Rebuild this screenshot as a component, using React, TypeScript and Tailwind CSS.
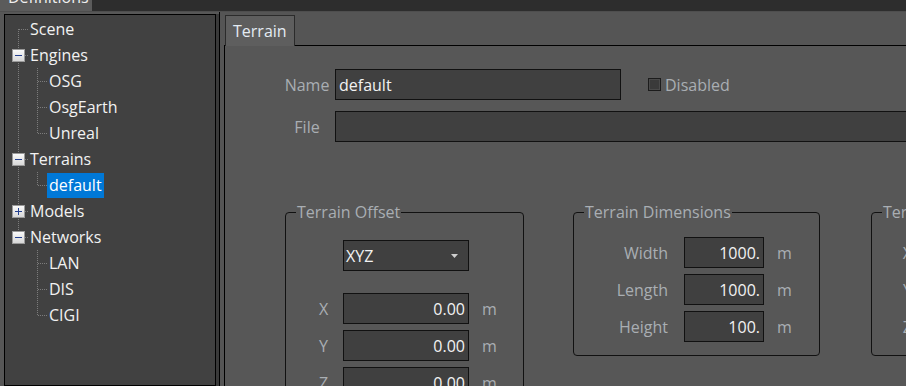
import React from "react";

type Node = { label: string; level: number; exp?: "-" | "+"; selected?: boolean };

const nodes: Node[] = [
  { label: "Scene", level: 0 },
  { label: "Engines", level: 0, exp: "-" },
  { label: "OSG", level: 1 },
  { label: "OsgEarth", level: 1 },
  { label: "Unreal", level: 1 },
  { label: "Terrains", level: 0, exp: "-" },
  { label: "default", level: 1, selected: true },
  { label: "Models", level: 0, exp: "+" },
  { label: "Networks", level: 0, exp: "-" },
  { label: "LAN", level: 1 },
  { label: "DIS", level: 1 },
  { label: "CIGI", level: 1 },
];

const Expander = ({ open }: { open: boolean }) => (
  <svg width="13" height="13" viewBox="0 0 13 13" className="relative z-10">
    <defs>
      <linearGradient id="expg" x1="0" y1="0" x2="0" y2="1">
        <stop offset="0" stopColor="#fbfbfb" />
        <stop offset="1" stopColor="#d6d6d6" />
      </linearGradient>
    </defs>
    <rect x="0.5" y="0.5" width="12" height="12" fill="url(#expg)" stroke="#9a9a9a" />
    <path d="M3 6.5H10" stroke="#24408f" shapeRendering="crispEdges" />
    {!open && <path d="M6.5 3V10" stroke="#24408f" shapeRendering="crispEdges" />}
  </svg>
);

// dotted connector lines of the tree
const TreeLines = () => {
  const c = (i: number) => 14 + 26 * i;
  const top = (i: number) => 1 + 26 * i;
  const dash = { stroke: "#7c7c7c", strokeDasharray: "1 1", shapeRendering: "crispEdges" as const };
  return (
    <svg className="absolute inset-0 pointer-events-none" width="210" height="400">
      <line x1="13.5" y1={c(0)} x2="13.5" y2={c(8)} {...dash} />
      {[0, 1, 5, 7, 8].map((i) => (
        <line key={i} x1="14" y1={c(i) + 0.5} x2="24" y2={c(i) + 0.5} {...dash} />
      ))}
      <line x1="32.5" y1={top(2)} x2="32.5" y2={c(4)} {...dash} />
      <line x1="32.5" y1={top(6)} x2="32.5" y2={c(6)} {...dash} />
      <line x1="32.5" y1={top(9)} x2="32.5" y2={c(11)} {...dash} />
      {[2, 3, 4, 6, 9, 10, 11].map((i) => (
        <line key={"h" + i} x1="33" y1={c(i) + 0.5} x2="42" y2={c(i) + 0.5} {...dash} />
      ))}
    </svg>
  );
};

const Field = ({ w, value, align = "right" }: { w: string; value: string; align?: string }) => (
  <div
    className={`${w} shrink-0 h-[31px] bg-[#404040] border border-[#111] flex items-center text-[#f2f2f2] ${
      align === "right" ? "justify-end pr-[3px]" : "pl-[3px]"
    }`}
  >
    {value}
  </div>
);

const Legend = ({ children }: { children: React.ReactNode }) => (
  <legend className="ml-[10px] px-[1px] leading-[22px] text-[#a9aeb3]">{children}</legend>
);

export default function App() {
  return (
    <div className="w-[906px] h-[386px] overflow-hidden bg-[#2d2d2d] flex flex-col font-['Open_Sans',sans-serif] text-[16px]">
      {/* top dock title */}
      <div className="h-[12px] shrink-0 border-b border-[#4e4e4e] flex">
        <div className="w-[92px] h-[11px] bg-[#5b5b5b] overflow-hidden">
          <div className="-mt-[14px] pl-[8px] leading-[22px] text-[#f0f0f0]">Definitions</div>
        </div>
      </div>

      <div className="flex flex-1 min-h-0">
        {/* left: tree */}
        <div className="flex shrink-0 bg-[#575757] pl-[4px] pt-[2px]">
          <div className="w-[212px] bg-[#414141] border border-black relative">
            <TreeLines />
            <div className="pt-[1px] relative">
              {nodes.map((n) => (
                <div key={n.label} className="h-[26px] flex items-center">
                  {n.level === 0 ? (
                    <div className="w-[25px] shrink-0 flex items-center">
                      {n.exp && (
                        <div className="ml-[7px]">
                          <Expander open={n.exp === "-"} />
                        </div>
                      )}
                    </div>
                  ) : (
                    <div className="w-[42px] shrink-0" />
                  )}
                  <span
                    className={`leading-[25px] ${
                      n.level === 1 ? "px-[2px]" : ""
                    } ${n.selected ? "bg-[#0078d7] text-white" : "text-[#f2f2f2]"}`}
                  >
                    {n.label}
                  </span>
                </div>
              ))}
            </div>
          </div>
          <div className="w-[3px] bg-[#3a3a3a]" />
        </div>

        {/* right: tab widget */}
        <div className="flex-1 border-l border-black bg-[#555555] pl-[4px] pt-[3px] flex flex-col min-w-0">
          <div className="flex">
            <div className="ml-[1px] h-[31px] -mb-[1px] relative z-10 px-[7px] flex items-center bg-[#5e5e5e] border border-b-0 border-[#2b2b2b] text-[#e4ebf2]">
              Terrain
            </div>
          </div>
          <div className="flex-1 border-t border-l border-black bg-[#575757] flex flex-col">
            <div className="mt-[23px] flex items-center">
              <div className="ml-[54px] w-[56px] shrink-0 text-center text-[#a9aeb3]">Name</div>
              <Field w="w-[286px]" value="default" align="left" />
              <div className="ml-[27px] w-[13px] h-[13px] shrink-0 border border-[#1c1c1c] bg-[#3a3a3a] shadow-[inset_0_0_0_1px_#4a4a4a]" />
              <span className="ml-[4px] text-[#a9aeb3]">Disabled</span>
            </div>
            <div className="mt-[11px] flex items-center">
              <div className="ml-[54px] w-[56px] shrink-0 text-center text-[#a9aeb3]">File</div>
              <Field w="w-[700px]" value="" align="left" />
            </div>

            <div className="mt-[59px] flex items-start">
              <fieldset className="ml-[60px] w-[239px] h-[220px] shrink-0 border border-[#111] rounded-[4px]">
                <Legend>Terrain Offset</Legend>
                <div className="mt-[17px] ml-[57px] w-[126px] h-[31px] bg-[#404040] border border-[#111] flex items-center justify-between pl-[2px] pr-[10px] text-[#f2f2f2]">
                  <span>XYZ</span>
                  <svg width="7" height="4" viewBox="0 0 7 4">
                    <path d="M0 0H7L3.5 4Z" fill="#cfcfcf" />
                  </svg>
                </div>
                <div className="mt-[22px] flex flex-col gap-[6px]">
                  {["X", "Y", "Z"].map((l) => (
                    <div key={l} className="flex items-center">
                      <div className="ml-[18px] w-[39px] shrink-0 text-center text-[#a9aeb3]">{l}</div>
                      <Field w="w-[126px]" value="0.00" />
                      <span className="ml-[13px] text-[#a9aeb3]">m</span>
                    </div>
                  ))}
                </div>
              </fieldset>

              <fieldset className="ml-[49px] w-[247px] h-[155px] shrink-0 border border-[#111] rounded-[4px]">
                <Legend>Terrain Dimensions</Legend>
                <div className="mt-[14px] flex flex-col gap-[6px]">
                  {[
                    ["Width", "1000."],
                    ["Length", "1000."],
                    ["Height", "100."],
                  ].map(([l, v]) => (
                    <div key={l} className="flex items-center">
                      <div className="w-[94px] shrink-0 text-right text-[#a9aeb3]">{l}</div>
                      <div className="ml-[16px]">
                        <Field w="w-[80px]" value={v} />
                      </div>
                      <span className="ml-[13px] text-[#a9aeb3]">m</span>
                    </div>
                  ))}
                </div>
              </fieldset>

              <fieldset className="ml-[51px] w-[247px] h-[155px] shrink-0 border border-[#111] rounded-[4px]">
                <Legend>Terrain Rotation</Legend>
                <div className="mt-[14px] flex flex-col gap-[6px]">
                  {["X", "Y", "Z"].map((l) => (
                    <div key={l} className="flex items-center">
                      <div className="w-[40px] shrink-0 text-right text-[#a9aeb3]">{l}</div>
                      <div className="ml-[16px]">
                        <Field w="w-[80px]" value="0." />
                      </div>
                    </div>
                  ))}
                </div>
              </fieldset>
            </div>
          </div>
        </div>
      </div>
    </div>
  );
}
